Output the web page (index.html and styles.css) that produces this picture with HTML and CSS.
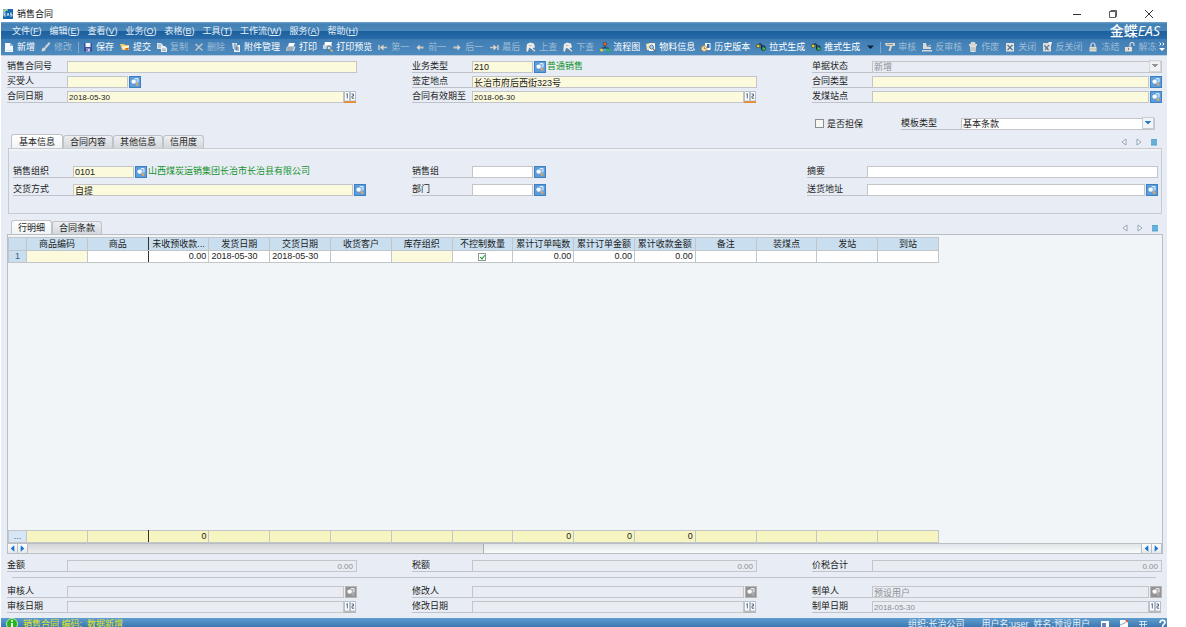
FILE: index.html
```html
<!DOCTYPE html>
<html lang="zh-CN">
<head>
<meta charset="utf-8">
<title>销售合同</title>
<link rel="stylesheet" href="styles.css">
</head>
<body>
<svg class="sprite" aria-hidden="true">
  <symbol id="i-new" viewBox="0 0 10 10"><path d="M1 1h5l3 3v6H1z" fill="#f4f9ff"/><path d="M6 1v3h3z" fill="#8db9e2"/><path d="M2 8h6v1H2z" fill="#cfe0f0"/></symbol>
  <symbol id="i-edit" viewBox="0 0 10 10"><path d="M8 0l1.500 1.500L5 6.500 3.500 5z" fill="#c9d2da"/><path d="M3.200 5.200l1.800 1.600L3.500 9 .5 9.500 1.200 6.500z" fill="#d8d8d2"/></symbol>
  <symbol id="i-save" viewBox="0 0 10 10"><path d="M1 1h8v8.500H1z" fill="#3c4d9c"/><path d="M2.500 1h5v4h-5z" fill="#f3f5ff"/><path d="M3 6.500h4v3H3z" fill="#c9cfe8"/><path d="M3.500 7h1v2h-1z" fill="#303a7a"/></symbol>
  <symbol id="i-submit" viewBox="0 0 10 10"><path d="M0 2h4l1 1h4v5H2z" fill="#f5c766"/><path d="M2 4h7l-1 3H3z" fill="#fff2c8"/><path d="M5 6l4 0-2 3z" fill="#d26a1c"/></symbol>
  <symbol id="i-copy" viewBox="0 0 10 10"><path d="M0 1h4l2 2v4H0z" fill="#dde3e8"/><path d="M4 4h4l2 2v4H4z" fill="#eef0f0"/><path d="M1 3h3M1 5h3M5 7h4M5 8.500h4" stroke="#7e8f9f" stroke-width=".7"/></symbol>
  <symbol id="i-del" viewBox="0 0 10 10"><path d="M1.500 2l7 6.500M8.500 1.500l-7 7" stroke="#b9c1c7" stroke-width="1.600"/></symbol>
  <symbol id="i-att" viewBox="0 0 10 10"><path d="M3 3h6v7H3z" fill="#eef4fa"/><path d="M1 1h5v6H2z" fill="#dbe6ef"/><path d="M4 1.500v5a1 1 0 002 0V3M5 6h3M5 8h3" stroke="#43698c" stroke-width=".9" fill="none"/></symbol>
  <symbol id="i-print" viewBox="0 0 10 10"><path d="M3 1h6L7.500 4.500H2z" fill="#fff"/><path d="M1 4.500h8.500L8 9H0z" fill="#d6dde4"/><path d="M1.500 6h6M1 8h6" stroke="#4d5d6c" stroke-width=".8"/></symbol>
  <symbol id="i-preview" viewBox="0 0 10 10"><path d="M2 0h7L8 4H1z" fill="#fff"/><path d="M0 3h9l-1 4H0z" fill="#cdd8e1"/><circle cx="6" cy="6" r="2" fill="#bfe3ff" stroke="#34506b" stroke-width=".8"/><path d="M7.500 7.500L9.500 9.500" stroke="#f3c16a" stroke-width="1.400"/></symbol>
  <symbol id="i-first" viewBox="0 0 10 10"><path d="M1 3v5M9 5.500H4" stroke="#c9c6bf" stroke-width="1.600"/><path d="M2 5.500L5.500 2.500v6z" fill="#dcd8d0"/></symbol>
  <symbol id="i-prev" viewBox="0 0 10 10"><path d="M8.500 5.500H4" stroke="#c9c6bf" stroke-width="2"/><path d="M1.500 5.500l3-3v6z" fill="#dcd8d0"/></symbol>
  <symbol id="i-next" viewBox="0 0 10 10"><path d="M1.500 5.500H6" stroke="#c9c6bf" stroke-width="2"/><path d="M8.500 5.500l-3-3v6z" fill="#dcd8d0"/></symbol>
  <symbol id="i-last" viewBox="0 0 10 10"><path d="M9 3v5M1 5.500h5" stroke="#c9c6bf" stroke-width="1.600"/><path d="M8 5.500L4.500 2.500v6z" fill="#dcd8d0"/></symbol>
  <symbol id="i-up" viewBox="0 0 10 10"><path d="M.5 6L1 2 4 .5l4 1 1 4-2.500.5L9.500 9l-1.500.5L5 6.500 3 6 2 9.500H.5z" fill="#efebe4"/><path d="M3 3.500h2.500" stroke="#b4bfc8"/><path d="M7 8l1.500 1.500" stroke="#c8a983"/></symbol>
  <symbol id="i-flow" viewBox="0 0 10 10"><path d="M5 3v4M1.500 8V6h7v2" stroke="#1d3550" fill="none"/><circle cx="5" cy="2" r="1.800" fill="#e86a2c" stroke="#1d3550" stroke-width=".5"/><circle cx="1.700" cy="8" r="1.600" fill="#f4cf2e"/><circle cx="5" cy="8" r="1.400" fill="#3fb6d8"/><circle cx="8.300" cy="8" r="1.600" fill="#2dbb3c"/></symbol>
  <symbol id="i-info" viewBox="0 0 10 10"><path d="M0 2l4-1h5v7H1z" fill="#f3e3b5"/><path d="M3 2h6v7H3z" fill="#fff"/><circle cx="5.500" cy="5" r="2" fill="#a8d2f2" stroke="#42637e" stroke-width=".8"/><path d="M7 6.500l2 3" stroke="#6a5a48" stroke-width="1.200"/></symbol>
  <symbol id="i-hist" viewBox="0 0 10 10"><path d="M4 1h5.500v7H4z" fill="#fff"/><path d="M6 2h2.500v4H6z" fill="#2f6dbb"/><circle cx="3.200" cy="6.500" r="2.700" fill="#fde9b5" stroke="#c98f3a" stroke-width=".8"/><path d="M3.200 5v1.700h1.500" stroke="#6b4a1e" stroke-width=".7" fill="none"/></symbol>
  <symbol id="i-pull" viewBox="0 0 10 10"><path d="M2 3c3-2 4-1 3.500 2s1.500 4 3 1.500S7 3 5.500 4.500" fill="none" stroke="#162c46" stroke-width="1.200"/><circle cx="2.200" cy="4" r="1.800" fill="#f1c531" stroke="#253b34" stroke-width=".6"/><circle cx="7.800" cy="6.800" r="1.800" fill="#37bd4a" stroke="#1a3b34" stroke-width=".6"/></symbol>
  <symbol id="i-audit" viewBox="0 0 10 10"><path d="M0 1h10v3H7L5.500 9h-2L5 4H1z" fill="#dcd6c9"/><path d="M2 2.500h6" stroke="#7c8c97" stroke-width=".8"/></symbol>
  <symbol id="i-unaudit" viewBox="0 0 10 10"><path d="M1 1h3l1 4h4v2H1z" fill="#dcdad4"/><path d="M0 8h10v1.500H0z" fill="#d6d8da"/><path d="M5.500 4.500L9 3" stroke="#b8c0c7"/></symbol>
  <symbol id="i-void" viewBox="0 0 10 10"><path d="M3 0h4l.5 2H9v2H1V2h1.500z" fill="#d8d6d0"/><path d="M2 4h6L7.500 10h-5z" fill="#e5e2dc"/><path d="M4 5v4M6 5v4" stroke="#8b98a2" stroke-width=".7"/></symbol>
  <symbol id="i-close" viewBox="0 0 10 10"><path d="M1 1h8v8.500H1z" fill="#e4e4e0"/><path d="M2.500 3l5 5M7.500 3l-5 5" stroke="#54728c" stroke-width="1.200"/></symbol>
  <symbol id="i-unclose" viewBox="0 0 10 10"><path d="M1 1h8v8.500H1z" fill="#dcdcd8"/><path d="M2.500 3.500l4 4.500M7 3L3 8" stroke="#54728c" stroke-width="1.200"/><path d="M6 0l4 0-1 4z" fill="#f1f1ee"/></symbol>
  <symbol id="i-lock" viewBox="0 0 10 10"><path d="M3 5V3a2 2 0 014 0v2" fill="none" stroke="#d5d8da" stroke-width="1.200"/><path d="M1.500 5h7v4.500h-7z" fill="#e3ddd2"/><path d="M2 7h6" stroke="#a9a69e" stroke-width=".7"/></symbol>
  <symbol id="i-unlock" viewBox="0 0 10 10"><path d="M5 5V2.500a2 2 0 014 0V4" fill="none" stroke="#d5d8da" stroke-width="1.200"/><path d="M0 5h7v4.500H0z" fill="#e3ddd2"/><path d="M3 6h1v2H3z" fill="#77828b"/></symbol>
  <symbol id="i-look" viewBox="0 0 12 12"><path d="M5 2.500h4.500v5H5z" fill="#fff" opacity=".3"/><circle cx="4.600" cy="5.600" r="2.200" fill="#f6fbff"/><path d="M6 2.500h3v3.500" stroke="#d8ebff" fill="none"/><path d="M7 7.500l2 2" stroke="#e9a851" stroke-width="1.800"/></symbol>
  <symbol id="i-cal" viewBox="0 0 12 12"><path d="M.5.500h5v9.500h-5zM6.500.500h5v9.500h-5z" fill="#fff" stroke="#b4bfcd"/><path d="M2.300 3.300l1-.8v5M7.500 3h2v2H8v2.200h2.200" stroke="#46546c" stroke-width=".9" fill="none"/><path d="M0 10.200h12V12H0z" fill="var(--base)"/></symbol>
</svg>

<div class="app">
  <header class="titlebar">
    <svg class="app-icon" viewBox="0 0 10 10"><path d="M0 0h10v10H0z" fill="#1768b4"/><path d="M0 0h5L0 5z" fill="#58b2ea"/><path d="M0 2l2 0 1.500-2 1 2" stroke="#d9e64b" fill="none"/><path d="M3 4H1v3h2M1 5.500h1.500M4 7l1-3 1 3M9 4H7.500v1.500H9V7H7" stroke="#fff" stroke-width=".7" fill="none"/></svg>
    <h1 class="title">销售合同</h1>
    <div class="win-buttons">
      <button aria-label="最小化"><svg viewBox="0 0 10 10"><path d="M1 5.500h8" stroke="#333"/></svg></button>
      <button aria-label="还原"><svg viewBox="0 0 10 10"><path d="M1.500 2.500h6v6h-6zM3 2.500v-1h5.500v6h-1" stroke="#333" stroke-width=".8" fill="none"/></svg></button>
      <button aria-label="关闭窗口"><svg viewBox="0 0 10 10"><path d="M1 1l8 8M9 1L1 9" stroke="#333"/></svg></button>
    </div>
  </header>

  <nav class="menubar">
    <button>文件(<u>F</u>)</button><button>编辑(<u>E</u>)</button><button>查看(<u>V</u>)</button><button>业务(<u>O</u>)</button><button>表格(<u>B</u>)</button><button>工具(<u>T</u>)</button><button>工作流(<u>W</u>)</button><button>服务(<u>A</u>)</button><button>帮助(<u>H</u>)</button>
    <span class="brand">金蝶<em>EAS</em></span>
  </nav>

  <div class="toolbar">
    <button><svg><use href="#i-new"/></svg>新增</button>
    <button disabled><svg><use href="#i-edit"/></svg>修改</button>
    <i class="sep"></i>
    <button><svg><use href="#i-save"/></svg>保存</button>
    <button><svg><use href="#i-submit"/></svg>提交</button>
    <button disabled><svg><use href="#i-copy"/></svg>复制</button>
    <button disabled><svg><use href="#i-del"/></svg>删除</button>
    <button><svg><use href="#i-att"/></svg>附件管理</button>
    <button><svg><use href="#i-print"/></svg>打印</button>
    <button><svg><use href="#i-preview"/></svg>打印预览</button>
    <button disabled><svg><use href="#i-first"/></svg>第一</button>
    <button disabled><svg><use href="#i-prev"/></svg>前一</button>
    <button disabled><svg><use href="#i-next"/></svg>后一</button>
    <button disabled><svg><use href="#i-last"/></svg>最后</button>
    <button disabled><svg><use href="#i-up"/></svg>上查</button>
    <button disabled><svg><use href="#i-up"/></svg>下查</button>
    <button><svg><use href="#i-flow"/></svg>流程图</button>
    <button><svg><use href="#i-info"/></svg>物料信息</button>
    <button><svg><use href="#i-hist"/></svg>历史版本</button>
    <button><svg><use href="#i-pull"/></svg>拉式生成</button>
    <button><svg><use href="#i-pull"/></svg>推式生成</button>
    <button class="drop" aria-label="更多生成"><svg viewBox="0 0 10 10"><path d="M1 3.500h7L4.500 7z" fill="#0d2237"/></svg></button>
    <i class="sep"></i>
    <button disabled><svg><use href="#i-audit"/></svg>审核</button>
    <button disabled><svg><use href="#i-unaudit"/></svg>反审核</button>
    <button disabled><svg><use href="#i-void"/></svg>作废</button>
    <button disabled><svg><use href="#i-close"/></svg>关闭</button>
    <button disabled><svg><use href="#i-unclose"/></svg>反关闭</button>
    <button disabled><svg><use href="#i-lock"/></svg>冻结</button>
    <button disabled><svg><use href="#i-unlock"/></svg>解冻</button>
    <button class="more" aria-label="更多"><svg viewBox="0 0 6 10"><path d="M.5.500l1.500 1.500L.5 3.500M3.500.500L5 2 3.500 3.500" stroke="#fff" fill="none"/><path d="M0 6h6L3 9z" fill="#fff"/></svg></button>
  </div>

  <main class="content">
    <section class="form3">
      <div class="field"><label for="f1">销售合同号</label><input id="f1" class="req"></div>
      <div class="field"><label for="f2">业务类型</label><input id="f2" class="req short" value="210"><button class="look" aria-label="选择业务类型"><svg><use href="#i-look"/></svg></button><output class="name">普通销售</output></div>
      <div class="field"><label for="f3">单据状态</label><select id="f3" disabled><option>新增</option></select></div>
      <div class="field"><label for="f4">买受人</label><input id="f4" class="req short"><button class="look" aria-label="选择买受人"><svg><use href="#i-look"/></svg></button></div>
      <div class="field"><label for="f5">签定地点</label><input id="f5" class="req" value="长治市府后西街323号"></div>
      <div class="field"><label for="f6">合同类型</label><input id="f6" class="req"><button class="look" aria-label="选择合同类型"><svg><use href="#i-look"/></svg></button></div>
      <div class="field"><label for="f7">合同日期</label><input id="f7" class="req date" value="2018-05-30"><button class="cal" aria-label="选择合同日期"><svg><use href="#i-cal"/></svg></button></div>
      <div class="field"><label for="f8">合同有效期至</label><input id="f8" class="req date" value="2018-06-30"><button class="cal" aria-label="选择有效期"><svg><use href="#i-cal"/></svg></button></div>
      <div class="field"><label for="f9">发煤站点</label><input id="f9" class="req"><button class="look" aria-label="选择发煤站点"><svg><use href="#i-look"/></svg></button></div>
    </section>

    <section class="options">
      <label class="check"><input type="checkbox">是否担保</label>
      <div class="field"><label for="f10">模板类型</label><select id="f10"><option>基本条款</option></select></div>
    </section>

    <div class="tabs">
      <button class="tab active">基本信息</button><button class="tab">合同内容</button><button class="tab">其他信息</button><button class="tab">信用度</button>
      <span class="tab-nav"><button aria-label="上一页签"><svg viewBox="0 0 8 8"><path d="M6 1v6L2 4z" fill="#fff" stroke="#8fa3b3"/></svg></button><button aria-label="下一页签"><svg viewBox="0 0 8 8"><path d="M2 1v6l4-3z" fill="#fff" stroke="#8fa3b3"/></svg></button><button aria-label="页签列表"><svg viewBox="0 0 8 8"><path d="M1 1h6v6.500H1z" fill="#5aa7d6"/><path d="M1 3h6M1 5h6" stroke="#8cc6e8" stroke-width=".6"/></svg></button></span>
    </div>
    <section class="panel basic">
      <div class="field"><label for="g1">销售组织</label><input id="g1" class="req short" value="0101"><button class="look" aria-label="选择销售组织"><svg><use href="#i-look"/></svg></button><output class="name">山西煤炭运销集团长治市长治县有限公司</output></div>
      <div class="field"><label for="g2">销售组</label><input id="g2" class="short"><button class="look" aria-label="选择销售组"><svg><use href="#i-look"/></svg></button></div>
      <div class="field"><label for="g3">摘要</label><input id="g3"></div>
      <div class="field"><label for="g4">交货方式</label><input id="g4" class="req" value="自提"><button class="look" aria-label="选择交货方式"><svg><use href="#i-look"/></svg></button></div>
      <div class="field"><label for="g5">部门</label><input id="g5" class="short"><button class="look" aria-label="选择部门"><svg><use href="#i-look"/></svg></button></div>
      <div class="field"><label for="g6">送货地址</label><input id="g6"><button class="look" aria-label="选择送货地址"><svg><use href="#i-look"/></svg></button></div>
    </section>

    <div class="tabs detail-tabs">
      <button class="tab active">行明细</button><button class="tab">合同条款</button>
      <span class="tab-nav"><button aria-label="上一页签"><svg viewBox="0 0 8 8"><path d="M6 1v6L2 4z" fill="#fff" stroke="#8fa3b3"/></svg></button><button aria-label="下一页签"><svg viewBox="0 0 8 8"><path d="M2 1v6l4-3z" fill="#fff" stroke="#8fa3b3"/></svg></button><button aria-label="页签列表"><svg viewBox="0 0 8 8"><path d="M1 1h6v6.500H1z" fill="#5aa7d6"/><path d="M1 3h6M1 5h6" stroke="#8cc6e8" stroke-width=".6"/></svg></button></span>
    </div>
    <section class="grid-panel">
      <table class="grid">
        <colgroup><col class="idx"><col span="15"></colgroup>
        <thead><tr><th></th><th>商品编码</th><th class="freeze">商品</th><th>未收预收款...</th><th>发货日期</th><th>交货日期</th><th>收货客户</th><th>库存组织</th><th>不控制数量</th><th>累计订单吨数</th><th>累计订单金额</th><th>累计收款金额</th><th>备注</th><th>装煤点</th><th>发站</th><th>到站</th></tr></thead>
        <tbody><tr><th>1</th><td class="req"></td><td class="freeze"></td><td class="num">0.00</td><td>2018-05-30</td><td>2018-05-30</td><td></td><td class="req"></td><td class="mid"><input class="tick" type="checkbox" checked aria-label="不控制数量"></td><td class="num">0.00</td><td class="num">0.00</td><td class="num">0.00</td><td></td><td></td><td></td><td></td></tr></tbody>
      </table>
      <table class="grid totals">
        <colgroup><col class="idx"><col span="15"></colgroup>
        <tbody><tr><th>...</th><td></td><td class="freeze"></td><td class="num">0</td><td></td><td></td><td></td><td></td><td></td><td class="num">0</td><td class="num">0</td><td class="num">0</td><td></td><td></td><td></td><td></td></tr></tbody>
      </table>
      <div class="scroll">
        <button aria-label="向左"><svg viewBox="0 0 10 10"><path d="M7 1.500v7L3 5z" fill="#1673c9"/></svg></button><button aria-label="向右"><svg viewBox="0 0 10 10"><path d="M3 1.500v7L7 5z" fill="#1673c9"/></svg></button>
        <div class="track"><div class="thumb"></div></div>
        <button aria-label="向左滚动"><svg viewBox="0 0 10 10"><path d="M7 1.500v7L3 5z" fill="#1673c9"/></svg></button><button aria-label="向右滚动"><svg viewBox="0 0 10 10"><path d="M3 1.500v7L7 5z" fill="#1673c9"/></svg></button>
      </div>
    </section>

    <section class="form3 sums">
      <div class="field"><label for="h1">金额</label><input id="h1" class="amount" disabled value="0.00"></div>
      <div class="field"><label for="h2">税额</label><input id="h2" class="amount" disabled value="0.00"></div>
      <div class="field"><label for="h3">价税合计</label><input id="h3" class="amount" disabled value="0.00"></div>
    </section>
    <hr class="rule">
    <section class="form3 audit">
      <div class="field"><label for="k1">审核人</label><input id="k1" disabled><button class="look" disabled aria-label="选择审核人"><svg><use href="#i-look"/></svg></button></div>
      <div class="field"><label for="k2">修改人</label><input id="k2" disabled><button class="look" disabled aria-label="选择修改人"><svg><use href="#i-look"/></svg></button></div>
      <div class="field"><label for="k3">制单人</label><input id="k3" disabled value="预设用户"><button class="look" disabled aria-label="选择制单人"><svg><use href="#i-look"/></svg></button></div>
      <div class="field"><label for="k4">审核日期</label><input id="k4" disabled><button class="cal" disabled aria-label="选择审核日期"><svg><use href="#i-cal"/></svg></button></div>
      <div class="field"><label for="k5">修改日期</label><input id="k5" disabled><button class="cal" disabled aria-label="选择修改日期"><svg><use href="#i-cal"/></svg></button></div>
      <div class="field"><label for="k6">制单日期</label><input id="k6" class="date" disabled value="2018-05-30"><button class="cal" disabled aria-label="选择制单日期"><svg><use href="#i-cal"/></svg></button></div>
    </section>
  </main>

  <footer class="status">
    <svg class="info" viewBox="0 0 12 12"><circle cx="6" cy="6" r="5.500" fill="#27b21f" stroke="#b6efae"/><path d="M6 2.200v1.600M6 5v5" stroke="#fff" stroke-width="2"/></svg>
    <span class="msg">销售合同 编码:&nbsp; 数据新增</span>
    <span class="org">组织:长治公司</span>
    <span>用户名:user&nbsp; 姓名:预设用户</span>
    <span class="status-icons">
      <svg viewBox="0 0 10 12"><path d="M1 3h8v7H1z" fill="#fff"/><path d="M2 5h4v5H2z" fill="#6b7fc0"/></svg>
      <svg viewBox="0 0 10 12"><path d="M1 2h8v9H1z" fill="#fff"/><path d="M1 7l5-2 2-3" stroke="#8aa6c0" fill="none"/><path d="M6 2h3v3z" fill="#e4572e"/></svg>
      <svg viewBox="0 0 10 12"><path d="M1 3.500h8M1 6.500h8M1 9.500h8M3.500 3v8M6.500 3v8" stroke="#e8f1f8" stroke-width=".8" fill="none"/></svg>
      <svg viewBox="0 0 10 12"><path d="M3 5c0-4 5-3 5-.5C8 6.500 5.500 6 5.500 9" stroke="#fff" stroke-width="1.600" fill="none"/></svg>
    </span>
  </footer>
</div>
</body>
</html>
```

FILE: styles.css
```css
* { box-sizing: border-box; }

body {
  margin: 0;
  padding: 0 19px 0 1px;
  background: #fff;
  overflow: hidden;
  color: #222;
  font: 9px/12px "Liberation Sans", "Noto Sans CJK SC", sans-serif;
}

button, input, select { font: inherit; color: inherit; margin: 0; }
button { border: 0; padding: 0; background: none; white-space: nowrap; }
svg { display: block; flex: none; }
.sprite { display: none; }

.app { display: flex; flex-direction: column; height: 100vh; }

/* Title bar */
.titlebar { display: flex; align-items: center; height: 22px; padding: 5px 13px 0 2px; }
.app-icon { width: 10px; height: 10px; }
.title { margin: 0 auto 0 4px; font-size: 9px; font-weight: 400; color: #111; }
.win-buttons { display: flex; gap: 26px; }
.win-buttons svg { width: 10px; height: 10px; }

/* Menu and tool bars */
.menubar {
  display: flex;
  align-items: center;
  gap: 8px;
  height: 17px;
  padding: 0 7px 0 11px;
  color: #e6f0f8;
  background: linear-gradient(#70a4cf 0, #4380b4 2px, #4c88ba 9px, #1b5f9c 9px, #2a6cab 100%);
}
.brand { margin-left: auto; color: #fff; font-size: 14px; font-weight: 500; line-height: 17px; }
.brand em { font-family: "Open Sans", sans-serif; }

.toolbar {
  display: flex;
  align-items: center;
  height: 17px;
  padding-left: 3px;
  color: #fff;
  background: linear-gradient(#3f7db4, #4d8abd);
  border-bottom: 1px solid #b9cbdc;
}
.toolbar button { display: flex; align-items: center; gap: 3px; margin-right: 6px; flex: none; }
.toolbar button:disabled { color: #9dbcd6; }
.toolbar svg { width: 10px; height: 10px; }
.toolbar .drop { margin-right: 4px; }
.sep { flex: none; width: 1px; height: 11px; margin-right: 4px; background: #7fa9cd; }
.toolbar .more { margin: 0 0 0 -3px; }
.toolbar .more svg { width: 6px; }

/* Fields */
.content { display: flex; flex-direction: column; flex: 1; min-height: 0; padding-top: 4px; background: #e8edf5; }
.form3 { display: grid; grid-template-columns: 350fr 345fr 350fr; gap: 2px 55px; padding: 0 5px 0 6px; }
.field { display: flex; align-items: flex-end; height: 13px; min-width: 0; }
.field label { flex: none; width: 60px; height: 13px; border-bottom: 1px solid #bfc3c9; white-space: nowrap; line-height: 13px; }
.field input, .field select {
  flex: 1;
  min-width: 0;
  height: 12px;
  padding: 0 1px;
  border: 1px solid #c3c5c8;
  border-radius: 0;
  background: #fff;
  outline: 0;
  line-height: 10px;
}
.field input.req { background: #fcfadc; }
.field input.short { flex: 0 0 61px; }
.field input.date { font-size: 8px; }
.field input:disabled, .field select:disabled { background: #e9edf3; color: #8b8f94; opacity: 1; }
.field input.amount { text-align: right; font-size: 8px; padding-right: 3px; }
.field select { appearance: none; }
.field:has(select) { display: grid; grid-template-columns: 60px 1fr; }
.field:has(select)::after {
  content: "";
  grid-area: 1 / 2;
  place-self: end;
  z-index: 1;
  width: 10px;
  height: 10px;
  margin: 0 1px 1px 0;
  border: 1px solid #c9ced6;
  background: conic-gradient(from -50deg at 50% 100%, #2d7cc8 100deg, transparent 0) center 3px / 6px 3px no-repeat, #f1f5f9;
}
.field:has(select:disabled)::after { filter: grayscale(1) opacity(.7); }
.field select { grid-area: 1 / 2; }
.look { flex: none; width: 12px; height: 12px; margin-left: 1px; background: #5f9dda; box-shadow: inset 0 0 0 1px #3c7fc2; }
.look svg, .cal svg { width: 12px; height: 12px; }
.look:disabled { background: #929292; box-shadow: inset 0 0 0 1px #b4b4b4; }
.look:disabled svg { filter: grayscale(1); }
.cal { flex: none; width: 12px; height: 12px; margin-right: 1px; --base: #e38a2c; }
.cal:disabled { --base: #b5b5b5; }
.name { margin-left: 1px; color: #16912c; white-space: nowrap; line-height: 13px; }

.options { display: flex; justify-content: flex-end; margin-top: 14px; padding-right: 12px; }
.options .field { width: 254px; margin-left: 38px; }
.check { display: flex; align-items: center; gap: 3px; }
.check input { appearance: none; width: 9px; height: 9px; border: 1px solid #8c8f93; background: #f6f6f2; }

/* Tabs */
.tabs { display: flex; align-items: flex-end; height: 14px; margin-top: 4px; padding: 0 8px 0 10px; }
.detail-tabs { margin-top: 6px; padding-right: 7px; }
.tab {
  height: 13px;
  padding: 0 6px;
  border: 1px solid #bfc3c8;
  border-bottom: 0;
  border-radius: 3px 3px 0 0;
  background: linear-gradient(#eceef1, #d3d7dc);
}
.tab.active { height: 14px; padding: 0 7px; background: linear-gradient(#fff, #f0f3f6); }
.detail-tabs .tab.active { padding: 0 6px; }
.tab-nav { display: flex; gap: 7px; margin: 0 1px 2px auto; }
.tab-nav svg { width: 8px; height: 8px; }

.panel { margin: 0 5px 0 7px; border: 1px solid #c7cacf; box-shadow: inset 0 2px 0 #f1f4f6; }
.basic { display: grid; grid-template-columns: 353fr 349fr 351fr; gap: 5px 46px; height: 66px; padding: 16px 3px 17px 4px; align-content: start; }

/* Detail grid */
.grid-panel {
  display: flex;
  flex-direction: column;
  flex: 1;
  min-height: 0;
  margin: 0 4px 0 6px;
  padding-top: 2px;
  border: 1px solid #b9bec4;
  background: #f1f5f8;
}
.grid { table-layout: fixed; width: 931px; border-collapse: collapse; }
.grid .idx { width: 18px; }
.grid th, .grid td { height: 12px; padding: 0 2px; border: 1px solid #c3c6c8; line-height: 11px; white-space: nowrap; overflow: hidden; font-weight: 400; }
.grid th { padding: 0; background: #c9dff0; text-align: center; }
.grid thead th { height: 13px; line-height: 12px; }
.grid tbody th { color: #41617c; }
.grid td { background: #fff; }
.grid td.req { background: #fcfadc; }
.grid .num { text-align: right; }
.grid .mid { text-align: center; }
.grid .freeze { border-right-color: #333; }
.totals { margin-top: auto; }
.totals td { background: #f6f5c1; }
.grid.totals th { background: #d6e6f4; }
.tick {
  appearance: none;
  display: block;
  width: 8px;
  height: 8px;
  margin: 0 auto;
  border: 1px solid #8d9a92;
  background: #fff;
  position: relative;
}
.tick:checked::after { content: ""; position: absolute; left: 2px; top: 0; width: 2px; height: 4px; border: solid #149a24; border-width: 0 1px 1px 0; rotate: 40deg; }

.scroll { display: flex; height: 10px; flex: none; border-top: 1px solid #b9bec4; }
.scroll button { width: 10px; border-right: 1px solid #b9bec4; background: linear-gradient(#fff, #e4e8ec); }
.scroll svg { width: 9px; height: 9px; }
.track { flex: 1; border-right: 1px solid #b9bec4; background: linear-gradient(#dfe5e8, #fafcfc); }
.thumb { width: 41%; height: 100%; border-right: 1px solid #a9adb1; background: linear-gradient(#d2d5d7, #eceded); }

.sums { margin-top: 5px; }
.rule { width: auto; height: 1px; margin: 5px 11px 0; border: 0; background: #bfc5cd; }
.audit { margin-top: 7px; padding-bottom: 5px; }

/* Status bar */
.status {
  display: flex;
  align-items: flex-start;
  flex: none;
  height: 9px;
  padding: 0 0 0 5px;
  overflow: hidden;
  color: #e8f1f8;
  background: linear-gradient(#5f9dd0, #3b79b1);
  white-space: nowrap;
}
.info { width: 12px; height: 12px; }
.msg { margin: 0 auto 0 5px; color: #e3e619; }
.org { margin-right: 17px; }
.status-icons { display: flex; gap: 9px; margin-left: 10px; }
.status-icons svg { width: 10px; height: 12px; }
```
